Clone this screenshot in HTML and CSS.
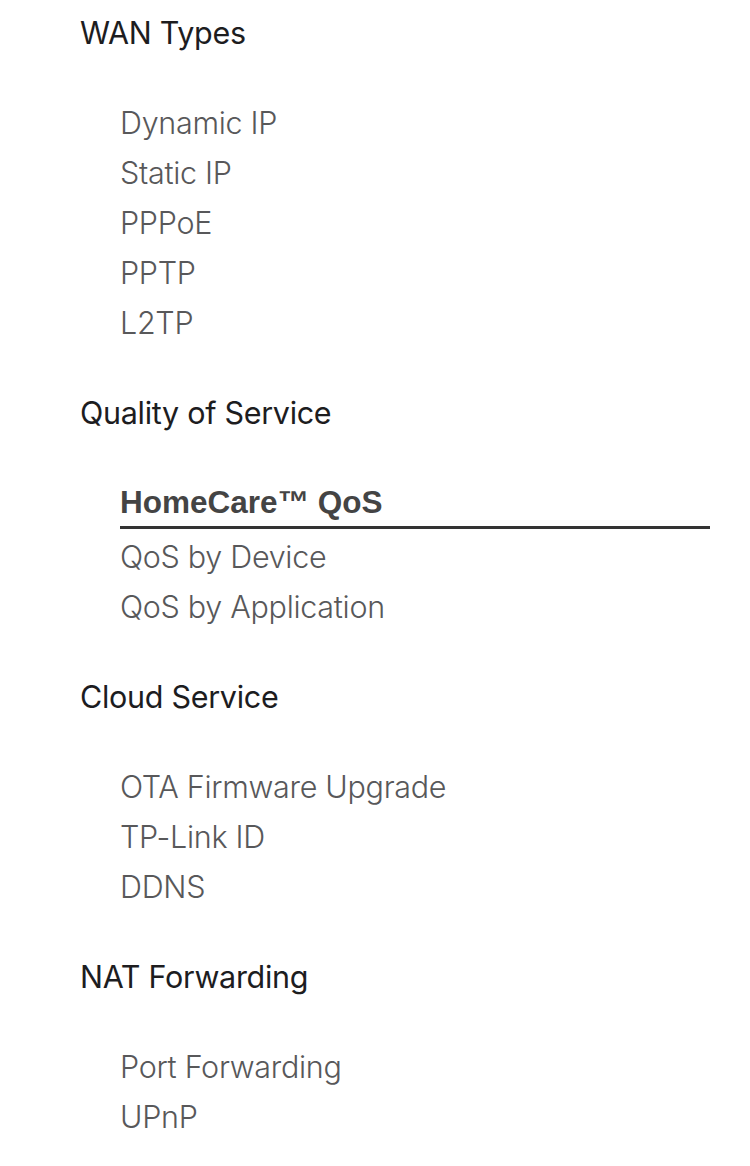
FILE: index.html
```html
<!DOCTYPE html>
<html lang="en">
<head>
  <meta charset="UTF-8" />
  <meta name="viewport" content="width=device-width, initial-scale=1.0" />
  <title>Features</title>
  <link rel="stylesheet" href="styles.css">
</head>
<body>
  <div class="features">
    <div class="group">
      <h3 class="group-title">WAN Types</h3>
      <ul class="group-list">
        <li>Dynamic IP</li>
        <li>Static IP</li>
        <li>PPPoE</li>
        <li>PPTP</li>
        <li>L2TP</li>
      </ul>
    </div>

    <div class="group">
      <h3 class="group-title">Quality of Service</h3>
      <ul class="group-list">
        <li class="active">HomeCare™ QoS</li>
        <li>QoS by Device</li>
        <li>QoS by Application</li>
      </ul>
    </div>

    <div class="group">
      <h3 class="group-title">Cloud Service</h3>
      <ul class="group-list">
        <li>OTA Firmware Upgrade</li>
        <li>TP-Link ID</li>
        <li>DDNS</li>
      </ul>
    </div>

    <div class="group">
      <h3 class="group-title">NAT Forwarding</h3>
      <ul class="group-list">
        <li>Port Forwarding</li>
        <li>UPnP</li>
      </ul>
    </div>
  </div>
</body>
</html>
```

FILE: styles.css
```css
html, body {
  margin: 0;
  padding: 0;
  background: #fff;
  font-family: Inter, "Noto Sans", sans-serif;
}
.features {
  padding: 8px 40px 0 80px;
}
.group-title {
  margin: 0;
  font-size: 30.5px;
  font-weight: 400;
  line-height: 50px;
  letter-spacing: -0.3px;
  color: #1d1d1f;
}
.group-list {
  list-style: none;
  margin: 40px 0;
  padding: 0 0 0 40px;
}
.group-list li {
  font-size: 30.5px;
  font-weight: 300;
  line-height: 50px;
  letter-spacing: -0.3px;
  color: #58585a;
}
.group-list li.active {
  font-family: "Liberation Sans", Arial, sans-serif;
  font-weight: 700;
  font-size: 31.5px;
  line-height: 48px;
  letter-spacing: 0;
  color: #444;
  border-bottom: 3px solid #333;
  margin-bottom: 3px;
}
```
